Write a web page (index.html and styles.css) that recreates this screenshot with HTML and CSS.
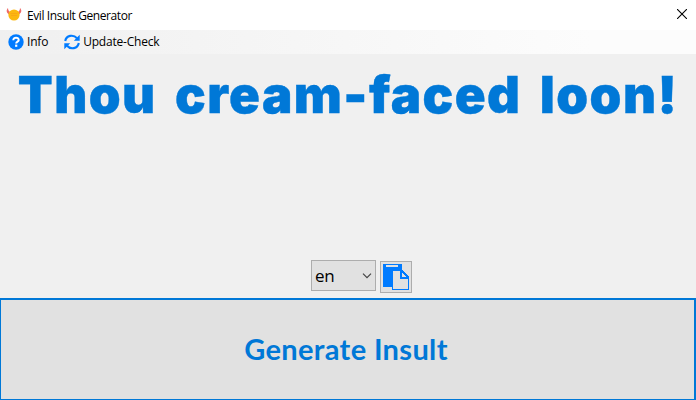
FILE: index.html
```html
<!DOCTYPE html>
<html lang="en">
<head>
    <meta charset="UTF-8">
    <meta name="viewport" content="width=device-width, initial-scale=1.0">
    <title>Evil Insult Generator</title>
    <link rel="stylesheet" href="styles.css">
</head>
<body>
    <div class="window">
        <header class="titlebar">
            <svg class="app-icon" width="16" height="16" viewBox="0 0 16 16">
                <path d="M2 1C0 3 0 6 4 8L5 5C3 5 2 3 2 1zM14 1c2 2 2 5-2 7l-1-3c2 0 3-2 3-4z" fill="#ee6a68"/>
                <ellipse cx="8" cy="8" rx="5.600" ry="5.600" fill="#fbb811"/>
                <path d="M4.500 6.500h7M5 8.500h6" stroke="#f9a814" fill="none"/>
            </svg>
            <span class="title-text">Evil Insult Generator</span>
            <button class="close" aria-label="Close">
                <svg width="10" height="10" viewBox="0 0 10 10">
                    <path d="M0 0L10 10M10 0L0 10" stroke="#000" stroke-width="1.100"/>
                </svg>
            </button>
        </header>

        <nav class="menu">
            <a class="menu-item info">
                <svg width="16" height="16" viewBox="0 0 16 16">
                    <circle cx="8" cy="8" r="7.700" fill="#007bff"/>
                    <path d="M5.300 6.200C5.300 2.700 10.900 3 10.700 6.100C10.600 7.700 8.200 7.600 8.200 9.500" stroke="#fff" stroke-width="2" fill="none"/>
                    <rect x="7.100" y="10.600" width="2.200" height="2.200" fill="#fff"/>
                </svg>
                <span>Info</span>
            </a>
            <a class="menu-item update">
                <svg width="16" height="16" viewBox="0 0 16 16">
                    <path d="M1.200 7C2.200 1.300 9.300 0 13 4.200M14.800 9C13.800 14.700 6.700 16 3 11.800" stroke="#007bff" stroke-width="2.100" fill="none"/>
                    <path d="M15.700 .800V6.700H9.800zM.300 15.200V9.300H6.200z" fill="#007bff"/>
                </svg>
                <span>Update-Check</span>
            </a>
        </nav>

        <main class="content">
            <h1 class="insult">Thou cream-faced loon!</h1>
            <div class="controls">
                <button class="language">
                    <span>en</span>
                    <svg width="10" height="6" viewBox="0 0 10 6">
                        <path d="M1 .700L5 4.700L9 .700" stroke="#444" stroke-width="1.200" fill="none"/>
                    </svg>
                </button>
                <button class="copy" aria-label="Copy">
                    <svg width="26" height="26" viewBox="0 0 26 26" shape-rendering="crispEdges">
                        <path d="M0 0H19V23H0z" fill="#007bff"/>
                        <path d="M3 1H15V3H3z" fill="#e1e1e1"/>
                        <path d="M9 6H19L26 13V26H9z" fill="#007bff"/>
                        <path d="M10 7H17V15H25V25H10z" fill="#e1e1e1"/>
                        <path d="M19 9L23 13H19z" fill="#e1e1e1"/>
                    </svg>
                </button>
            </div>
        </main>

        <button class="generate">Generate Insult</button>
    </div>
</body>
</html>
```

FILE: styles.css
```css
* {
    box-sizing: border-box;
}

body {
    margin: 0;
    font-family: "Open Sans", "Noto Sans", sans-serif;
    font-size: 12px;
    color: #000;
}

button {
    margin: 0;
    padding: 0;
    border: 0;
    background: none;
    font-family: inherit;
    color: inherit;
}

svg {
    display: block;
    flex: none;
}

.window {
    display: flex;
    flex-direction: column;
    width: 696px;
    height: 400px;
    overflow: hidden;
    background: #f0f0f0;
}

.titlebar {
    display: flex;
    align-items: center;
    height: 30px;
    padding: 0 9px 0 6px;
    background: #fff;
}

.title-text {
    margin-left: 5px;
    letter-spacing: -0.41px;
}

.close {
    margin: -2px 0 0 auto;
}

.menu {
    display: flex;
    align-items: center;
    gap: 16px;
    height: 24px;
    padding-left: 8px;
    background: linear-gradient(to right, #f0f0f0, #fcfcfc 85%);
}

.menu-item {
    display: flex;
    align-items: center;
    gap: 3px;
    letter-spacing: -0.2px;
}

.menu-item span {
    margin-top: -1px;
}

.content {
    display: flex;
    flex-direction: column;
    align-items: center;
    justify-content: space-between;
    height: 244px;
    padding: 10px 0 5px;
}

.insult {
    margin: 0;
    font-family: Inter, sans-serif;
    font-size: 51px;
    font-weight: 900;
    line-height: 62px;
    letter-spacing: 1.4px;
    word-spacing: 7px;
    white-space: nowrap;
    color: #0078d7;
    -webkit-text-stroke: 0.4px #0078d7;
}

.controls {
    display: flex;
    align-items: flex-end;
    gap: 4px;
    margin-left: 27px;
}

.language {
    display: flex;
    align-items: center;
    justify-content: space-between;
    width: 65px;
    height: 31px;
    margin-bottom: 2px;
    padding: 0 3px;
    border: 1px solid #adadad;
    background: #e1e1e1;
    font-size: 17px;
    letter-spacing: -0.4px;
}

.copy {
    display: flex;
    align-items: center;
    justify-content: center;
    width: 32px;
    height: 32px;
    border: 1px solid #adadad;
    background: #e1e1e1;
}

.generate {
    height: 102px;
    padding: 0 3px 2px 0;
    border: solid #0078d7;
    border-width: 2px 2px 1px 1px;
    background: #e1e1e1;
    font-family: Lato, sans-serif;
    font-size: 29px;
    font-weight: bold;
    letter-spacing: 0.35px;
    color: #0078d7;
}
```
